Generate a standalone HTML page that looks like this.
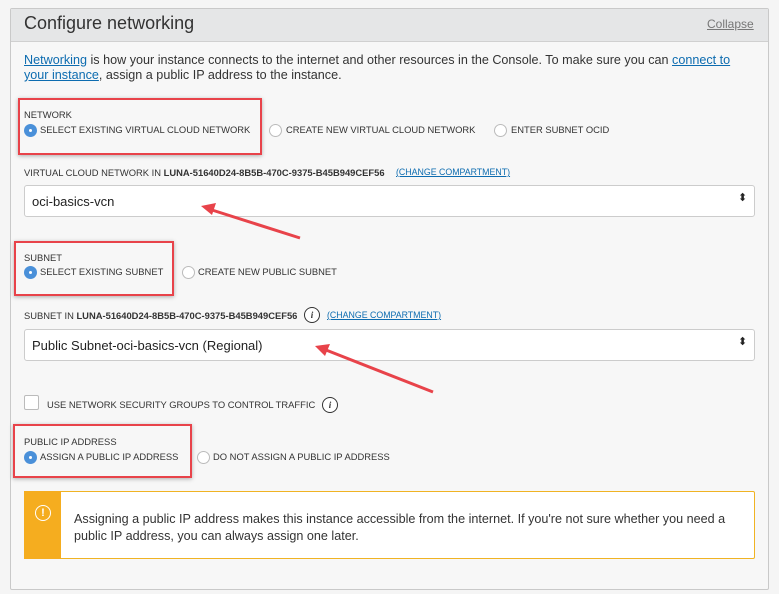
<!DOCTYPE html>
<html><head><style>
body{margin:0;width:779px;height:594px;background:#f5f5f5;font-family:"Liberation Sans",sans-serif;position:relative;overflow:hidden;color:#333}
.a{position:absolute;white-space:nowrap}
.panel{position:absolute;left:10px;top:8px;width:757px;height:580px;border:1px solid #c9c9c9;border-radius:2px;background:#f7f7f7}
.hdr{position:absolute;left:0;top:0;width:757px;height:32px;background:#e5e6e7;border-bottom:1px solid #d0d0d0}
.sm{font-size:9.4px;color:#333}
.lnk{color:#0d6cb0;text-decoration:underline}
.radio{position:absolute;width:11px;height:11px;border-radius:50%;border:1px solid #bbb;background:#fff}
.radio.on{background:#4a90d9;border-color:#4a90d9}
.radio.on::after{content:"";position:absolute;left:4px;top:4px;width:3px;height:3px;border-radius:50%;background:#fff}
.sel{position:absolute;left:24px;width:729px;height:30px;background:#fff;border:1px solid #ccc;border-radius:3px;font-size:13px;color:#222}
.sel span{position:absolute;left:7px;top:8px}
.red{position:absolute;border:2px solid #e8434a;box-shadow:0 1px 4px rgba(0,0,0,.3)}
.info{position:absolute;width:14px;height:14px;border:1.3px solid #333;border-radius:50%;font:italic bold 9px "Liberation Serif",serif;text-align:center;line-height:14px;background:#fff}
</style></head><body>
<div class="panel"><div class="hdr"></div></div>
<div class="a" style="left:24px;top:13px;font-size:18px;color:#333">Configure networking</div>
<div class="a lnk" style="left:707px;top:17px;font-size:12px;color:#777">Collapse</div>
<div class="a" style="left:24px;top:53px;font-size:12.6px;line-height:15px;color:#333"><span class="lnk">Networking</span> is how your instance connects to the internet and other resources in the Console. To make sure you can <span class="lnk">connect to</span><br><span class="lnk">your instance</span>, assign a public IP address to the instance.</div>

<div class="red" style="left:18px;top:98px;width:240px;height:53px"></div>
<div class="a sm" style="left:24px;top:109px">NETWORK</div>
<div class="radio on" style="left:24px;top:124px"></div>
<div class="a sm" style="left:40px;top:124px">SELECT EXISTING VIRTUAL CLOUD NETWORK</div>
<div class="radio" style="left:269px;top:124px"></div>
<div class="a sm" style="left:286px;top:124px">CREATE NEW VIRTUAL CLOUD NETWORK</div>
<div class="radio" style="left:494px;top:124px"></div>
<div class="a sm" style="left:511px;top:124px">ENTER SUBNET OCID</div>

<div class="a sm" style="left:24px;top:167px">VIRTUAL CLOUD NETWORK IN <b>LUNA-51640D24-8B5B-470C-9375-B45B949CEF56</b></div>
<div class="a lnk" style="left:396px;top:167px;font-size:8.8px">(CHANGE COMPARTMENT)</div>
<div class="sel" style="top:185px"><span>oci-basics-vcn</span><span style="left:713px;top:5px;font-size:11px">⬍</span></div>

<div class="red" style="left:14px;top:241px;width:156px;height:51px"></div>
<div class="a sm" style="left:24px;top:252px">SUBNET</div>
<div class="radio on" style="left:24px;top:266px"></div>
<div class="a sm" style="left:40px;top:266px">SELECT EXISTING SUBNET</div>
<div class="radio" style="left:182px;top:266px"></div>
<div class="a sm" style="left:198px;top:266px">CREATE NEW PUBLIC SUBNET</div>

<div class="a sm" style="left:24px;top:310px">SUBNET IN <b>LUNA-51640D24-8B5B-470C-9375-B45B949CEF56</b></div>
<div class="info" style="left:304px;top:307px">i</div>
<div class="a lnk" style="left:327px;top:310px;font-size:8.8px">(CHANGE COMPARTMENT)</div>
<div class="sel" style="top:329px"><span>Public Subnet-oci-basics-vcn (Regional)</span><span style="left:713px;top:5px;font-size:11px">⬍</span></div>

<div class="a" style="left:24px;top:395px;width:13px;height:13px;border:1px solid #bbb;border-radius:2px;background:#fff"></div>
<div class="a sm" style="left:47px;top:399px">USE NETWORK SECURITY GROUPS TO CONTROL TRAFFIC</div>
<div class="info" style="left:322px;top:397px">i</div>

<div class="red" style="left:13px;top:424px;width:175px;height:50px"></div>
<div class="a sm" style="left:24px;top:436px">PUBLIC IP ADDRESS</div>
<div class="radio on" style="left:24px;top:451px"></div>
<div class="a sm" style="left:40px;top:451px">ASSIGN A PUBLIC IP ADDRESS</div>
<div class="radio" style="left:197px;top:451px"></div>
<div class="a sm" style="left:213px;top:451px">DO NOT ASSIGN A PUBLIC IP ADDRESS</div>

<div class="a" style="left:24px;top:491px;width:729px;height:66px;background:#fff;border:1px solid #f0b323;border-radius:2px"></div>
<div class="a" style="left:24px;top:491px;width:37px;height:68px;background:#f5ad1f"></div>
<div class="a" style="left:35px;top:505px;width:14px;height:14px;border:1.3px solid #fff;border-radius:50%;color:#fff;font-size:11px;font-weight:bold;text-align:center;line-height:14px">!</div>
<div class="a" style="left:74px;top:511px;font-size:12.6px;line-height:17px;color:#333">Assigning a public IP address makes this instance accessible from the internet. If you're not sure whether you need a<br>public IP address, you can always assign one later.</div>

<svg class="a" style="left:0;top:0" width="779" height="594">
<g stroke="#e8434a" stroke-width="3" fill="#e8434a">
<line x1="300" y1="238" x2="212" y2="210"/>
<polygon points="201,206 216,203 212,215" stroke="none"/>
<line x1="433" y1="392" x2="326" y2="350"/>
<polygon points="315,346 330,344 325,356" stroke="none"/>
</g></svg>
</body></html>
